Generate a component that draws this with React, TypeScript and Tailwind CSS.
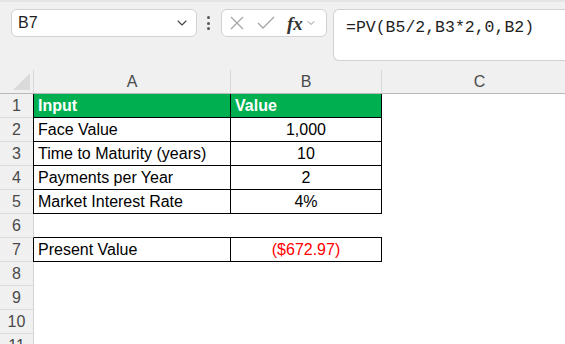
import { ChevronDown } from "lucide-react";

type Row = { n: number; a?: string; b?: string; head?: boolean; red?: boolean; lineBelow?: boolean };

const rows: Row[] = [
  { n: 1, a: "Input", b: "Value", head: true },
  { n: 2, a: "Face Value", b: "1,000" },
  { n: 3, a: "Time to Maturity (years)", b: "10" },
  { n: 4, a: "Payments per Year", b: "2" },
  { n: 5, a: "Market Interest Rate", b: "4%" },
  { n: 6, lineBelow: true },
  { n: 7, a: "Present Value", b: "($672.97)", red: true },
  { n: 8 },
  { n: 9 },
  { n: 10 },
  { n: 11 },
];

function SheetRow({ r }: { r: Row }) {
  const inTable = r.a !== undefined;
  return (
    <div className="flex h-[24px]">
      <div className="w-[33px] shrink-0 border-b border-[#dcdcdc] bg-[#f0f0f0] text-center text-[16px] leading-[23px] text-[#4a4a4a]">
        {r.n}
      </div>
      {inTable ? (
        <>
          <div
            className={`w-[197px] shrink-0 border-l border-b border-black pl-[4px] text-[16px] leading-[23px] ${
              r.head ? "bg-[#00b050] font-bold text-white" : "text-black"
            }`}
          >
            {r.a}
          </div>
          <div
            className={`w-[152px] shrink-0 border-x border-b border-black text-[16px] leading-[23px] ${
              r.head ? "bg-[#00b050] pl-[4px] font-bold text-white" : "text-center"
            } ${r.red ? "text-[#ff0000]" : "text-black"}`}
          >
            {r.b}
          </div>
        </>
      ) : (
        <>
          <div className={`w-[197px] shrink-0 border-l border-[#d4d4d4] ${r.lineBelow ? "border-b border-b-black" : ""}`} />
          <div className={`w-[152px] shrink-0 ${r.lineBelow ? "border-b border-black" : ""}`} />
        </>
      )}
      <div className="flex-1" />
    </div>
  );
}

export default function App() {
  return (
    <div
      className="relative h-[344px] w-[565px] overflow-hidden bg-white"
      style={{ fontFamily: '"Liberation Sans", Arial, sans-serif' }}
    >
      {/* formula bar */}
      <div className="flex h-[70px] items-start border-t-[2px] border-[#e4e4e4] bg-[#f0f0f0] pt-[7px]">
        <div className="ml-[11px] flex h-[28px] w-[186px] items-center justify-between rounded-[6px] border border-[#d2d2d2] bg-white pl-[6px] pr-[6px]">
          <span className="text-[16px] text-[#1f1f1f]">B7</span>
          <ChevronDown className="h-[16px] w-[16px] text-[#444]" strokeWidth={1.6} />
        </div>
        <div className="ml-[10px] flex h-[28px] flex-col items-center justify-center gap-[2.5px]">
          <div className="h-[3px] w-[3px] rounded-full bg-[#555]" />
          <div className="h-[3px] w-[3px] rounded-full bg-[#555]" />
          <div className="h-[3px] w-[3px] rounded-full bg-[#555]" />
        </div>
        <div className="ml-[11px] flex h-[28px] w-[106px] items-center rounded-[6px] border border-[#d2d2d2] bg-white">
          <svg className="ml-[7px]" width="16" height="16" viewBox="0 0 16 16">
            <path d="M2 2 L14 14 M14 2 L2 14" stroke="#a6a6a6" strokeWidth="1.3" fill="none" />
          </svg>
          <svg className="ml-[12px]" width="18" height="16" viewBox="0 0 18 16">
            <path d="M1 8 L6 13 L17 2" stroke="#a6a6a6" strokeWidth="1.3" fill="none" />
          </svg>
          <span
            className="ml-[12px] text-[19px] font-bold italic leading-none text-[#333]"
            style={{ fontFamily: '"Liberation Serif", "Times New Roman", serif' }}
          >
            fx
          </span>
          <ChevronDown className="ml-[2px] h-[12px] w-[12px] text-[#777]" strokeWidth={1.6} />
        </div>
        <div className="ml-[6px] h-[52px] flex-1 rounded-l-[6px] border border-r-0 border-[#d2d2d2] bg-white pl-[12px] pt-[5px]">
          <span
            className="text-[16.5px] text-[#1f1f1f]"
            style={{ fontFamily: '"Liberation Mono", "DejaVu Sans Mono", monospace' }}
          >
            =PV(B5/2,B3*2,0,B2)
          </span>
        </div>
      </div>

      {/* column headers */}
      <div className="flex h-[24px] border-b border-[#b8b8b8] bg-[#f0f0f0] text-[16px] leading-[23px] text-[#4a4a4a]">
        <div className="relative w-[33px] shrink-0">
          <svg className="absolute bottom-[3px] right-[3px]" width="17" height="17" viewBox="0 0 17 17">
            <path d="M17 0 L17 17 L0 17 Z" fill="#dadada" />
          </svg>
        </div>
        <div className="w-[197px] shrink-0 border-l border-[#d8d8d8] text-center">A</div>
        <div className="w-[152px] shrink-0 border-x border-[#d8d8d8] text-center">B</div>
        <div className="w-[196px] shrink-0 border-r border-[#d8d8d8] text-center">C</div>
      </div>

      {rows.map((r) => (
        <SheetRow key={r.n} r={r} />
      ))}
    </div>
  );
}
